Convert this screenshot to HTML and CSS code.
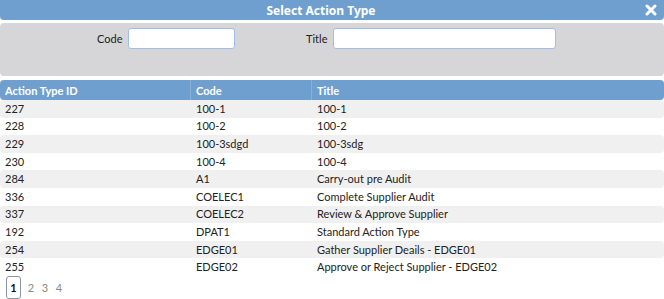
FILE: index.html
```html
<!DOCTYPE html>
<html lang="en">
<head>
  <meta charset="UTF-8" />
  <title>Select Action Type</title>
  <link rel="stylesheet" href="styles.css">
</head>
<body>
  <div class="dialog">
    <div class="titlebar">
      <span class="title">Select Action Type</span>
      <button class="close" aria-label="Close">
        <svg width="12" height="12" viewBox="0 0 12 12"><path d="M2 2 L10 10 M10 2 L2 10" stroke="#fff" stroke-width="3" stroke-linecap="round"/></svg>
      </button>
    </div>

    <div class="filters">
      <label class="code-label" for="code">Code</label>
      <input type="text" id="code" class="code-input" />
      <label class="title-label" for="title">Title</label>
      <input type="text" id="title" class="title-input" />
    </div>

    <table class="grid">
      <thead>
        <tr><th class="col-id">Action Type ID</th><th class="col-code">Code</th><th>Title</th></tr>
      </thead>
      <tbody>
        <tr><td>227</td><td>100-1</td><td>100-1</td></tr>
        <tr><td>228</td><td>100-2</td><td>100-2</td></tr>
        <tr><td>229</td><td>100-3sdgd</td><td>100-3sdg</td></tr>
        <tr><td>230</td><td>100-4</td><td>100-4</td></tr>
        <tr><td>284</td><td>A1</td><td>Carry-out pre Audit</td></tr>
        <tr><td>336</td><td>COELEC1</td><td>Complete Supplier Audit</td></tr>
        <tr><td>337</td><td>COELEC2</td><td>Review &amp; Approve Supplier</td></tr>
        <tr><td>192</td><td>DPAT1</td><td>Standard Action Type</td></tr>
        <tr><td>254</td><td>EDGE01</td><td>Gather Supplier Deails - EDGE01</td></tr>
        <tr><td>255</td><td>EDGE02</td><td>Approve or Reject Supplier - EDGE02</td></tr>
      </tbody>
    </table>

    <div class="pager">
      <span class="page current">1</span>
      <span class="page">2</span>
      <span class="page">3</span>
      <span class="page">4</span>
    </div>
  </div>
</body>
</html>
```

FILE: styles.css
```css
body {
  margin: 0;
  font-family: Lato, "Noto Sans", sans-serif;
  font-size: 11px;
  color: #222;
  background: #fff;
}

.dialog {
  width: 664px;
}

.titlebar {
  height: 20px;
  background-color: #6f9fcf;
  border-radius: 0 0 4px 4px;
  display: flex;
  align-items: center;
  justify-content: center;
  padding-right: 22px;
  position: relative;
}

.title {
  color: #fff;
  font-family: "Noto Sans", sans-serif;
  font-weight: 700;
  font-size: 12px;
}

.close {
  position: absolute;
  right: 6px;
  top: 3px;
  border: none;
  background: none;
  padding: 0;
  width: 14px;
  height: 14px;
  display: flex;
  align-items: center;
  justify-content: center;
}

.filters {
  margin-top: 3px;
  height: 53px;
  background-color: #d6d6d8;
  border-radius: 4px;
  display: flex;
  align-items: flex-start;
  padding-top: 5px;
  box-sizing: border-box;
}

.filters label {
  line-height: 21px;
  font-size: 11px;
  color: #222;
}

.code-label {
  margin-left: 97px;
  width: 25px;
}

.filters input {
  height: 21px;
  box-sizing: border-box;
  border: 1px solid #9fbfe6;
  border-radius: 3px;
  background: #fff;
  margin: 0;
  padding: 0 3px;
}

.code-input {
  margin-left: 6px !important;
  width: 107px;
}

.title-label {
  margin-left: 71px;
  width: 22px;
}

.title-input {
  margin-left: 5px !important;
  width: 223px;
}

.grid {
  margin-top: 4px;
  width: 664px;
  border-collapse: separate;
  border-spacing: 0;
  table-layout: fixed;
}

.grid th {
  background-color: #6f9fcf;
  color: #fff;
  font-weight: 700;
  text-align: left;
  height: 20px;
  padding: 0 5px;
  border-left: 1px solid #86afda;
}

.grid th:first-child {
  border-left: none;
  border-radius: 4px 0 0 4px;
}

.grid th:last-child {
  border-radius: 0 4px 4px 0;
}

.col-id {
  width: 180px;
}

.col-code {
  width: 110px;
}

.grid td {
  height: 17.6px;
  padding: 0 5px;
  line-height: 16px;
  white-space: nowrap;
}

.grid td:nth-child(2),
.grid td:nth-child(3) {
  padding-left: 6px;
}

.grid tbody tr:nth-child(odd) td {
  background-color: #f0f0f0;
}

.grid tbody tr td:first-child {
  border-radius: 4px 0 0 4px;
}

.grid tbody tr td:last-child {
  border-radius: 0 4px 4px 0;
}

.pager {
  display: flex;
  align-items: center;
  gap: 6px;
  margin-left: 6px;
  margin-top: 0;
}

.page {
  color: #888;
  font-size: 11px;
  width: 8px;
  text-align: center;
}

.current {
  width: 13px;
  height: 21px;
  line-height: 21px;
  border: 1px solid #8a94a6;
  border-radius: 3px;
  color: #111;
  font-weight: 700;
}
```
